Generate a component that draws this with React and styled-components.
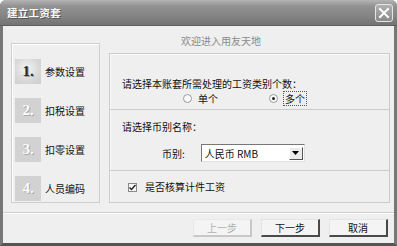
import React from 'react'
import styled, { createGlobalStyle } from 'styled-components'

const GlobalStyle = createGlobalStyle`
  html, body {
    margin: 0;
    padding: 0;
    overflow: hidden;
    background: #ffffff;
  }
`

const steps = [
  { n: '1.', label: '参数设置', active: true },
  { n: '2.', label: '扣税设置' },
  { n: '3.', label: '扣零设置' },
  { n: '4.', label: '人员编码' },
]

const App = () => {
  return (
    <>
      <GlobalStyle />
      <Window>
        <TitleBar>
          <Title>建立工资套</Title>
          <CloseButton>
            <svg width="12" height="12" viewBox="0 0 12 12">
              <path d="M2 2 L10 10 M10 2 L2 10" stroke="#fff" strokeWidth="2" strokeLinecap="square" />
            </svg>
          </CloseButton>
        </TitleBar>

        <Body>
          <StepPanel>
            {steps.map((s) => (
              <Step key={s.n}>
                <StepNum active={s.active}>{s.n}</StepNum>
                <StepLabel>{s.label}</StepLabel>
              </Step>
            ))}
          </StepPanel>

          <Main>
            <Welcome>欢迎进入用友天地</Welcome>
            <GroupBox>
              <Section height={57} top={22}>
                <Prompt>请选择本账套所需处理的工资类别个数：</Prompt>
                <RadioRow>
                  <Radio>
                    <RadioDot />
                    <span>单个</span>
                  </Radio>
                  <Radio>
                    <RadioDot checked />
                    <Focused>多个</Focused>
                  </Radio>
                </RadioRow>
              </Section>
              <Section height={62} top={9}>
                <Prompt>请选择币别名称：</Prompt>
                <SelectRow>
                  <span>币别:</span>
                  <Select>
                    <span>人民币 RMB</span>
                    <SelectArrow>
                      <svg width="7" height="4" viewBox="0 0 7 4">
                        <path d="M0 0 H7 L3.5 4 Z" fill="#000" />
                      </svg>
                    </SelectArrow>
                  </Select>
                </SelectRow>
              </Section>
              <Section height={31} top={9} last>
                <CheckRow>
                  <CheckBox>
                    <svg width="7" height="7" viewBox="0 0 7 7">
                      <path d="M0.5 3.5 L2.5 5.5 L6.5 1" stroke="#222" strokeWidth="1.4" fill="none" />
                    </svg>
                  </CheckBox>
                  <span>是否核算计件工资</span>
                </CheckRow>
              </Section>
            </GroupBox>
          </Main>
        </Body>

        <Footer>
          <Button disabled>上一步</Button>
          <Button>下一步</Button>
          <Button>取消</Button>
        </Footer>
      </Window>
    </>
  )
}

export default App

const Window = styled.div`
  width: 397px;
  height: 246px;
  box-sizing: border-box;
  background: #efefef;
  border-left: 3px solid #777;
  border-right: 3px solid #777;
  border-bottom: 3px solid #555;
  border-radius: 6px 6px 0 0;
  display: flex;
  flex-direction: column;
  font-family: "Noto Sans CJK SC", "Liberation Sans", sans-serif;
  font-size: 10px;
  color: #111;
`

const TitleBar = styled.div`
  height: 26px;
  margin: 0 -3px;
  box-sizing: border-box;
  padding: 0 4px 0 7px;
  border-radius: 6px 6px 0 0;
  background: linear-gradient(#b4b4b4 0%, #929292 25%, #828282 70%, #737373 100%);
  border-bottom: 1px solid #5e5e5e;
  display: flex;
  align-items: center;
  justify-content: space-between;
`

const Title = styled.div`
  color: #fafafa;
  font-weight: bold;
  font-size: 10.5px;
  letter-spacing: 0.3px;
  text-shadow: 1px 1px 0 #555;
`

const CloseButton = styled.div`
  width: 18px;
  height: 18px;
  box-sizing: border-box;
  border: 1px solid #e6e6e6;
  border-radius: 3px;
  background: linear-gradient(#b0b0b0, #8a8a8a);
  display: flex;
  align-items: center;
  justify-content: center;
`

const Body = styled.div`
  display: flex;
  align-items: flex-start;
  padding: 8px 0 0 8px;
  gap: 9px;
`

const StepPanel = styled.div`
  width: 89px;
  height: 160px;
  margin-top: 9px;
  box-sizing: border-box;
  border: 1px solid #cfcfcf;
  box-shadow: inset 1px 1px 0 #fff;
  padding: 15px 0 0 3px;
  display: flex;
  flex-direction: column;
  gap: 14px;
`

const Step = styled.div`
  display: flex;
  align-items: center;
  gap: 4px;
`

const StepNum = styled.div`
  width: 26px;
  height: 25px;
  background: ${(p) => (p.active ? 'radial-gradient(circle at 45% 40%, #f4f4f4 0%, #d8d8d8 60%, #cdcdcd 100%)' : '#d2d2d2')};
  color: ${(p) => (p.active ? '#2a2a2a' : '#fbfbfb')};
  font-family: "Liberation Serif", serif;
  font-weight: bold;
  font-size: 15px;
  display: flex;
  align-items: center;
  justify-content: center;
  text-shadow: ${(p) => (p.active ? '1px 1px 0 #999' : '1px 1px 0 #aaa')};
`

const StepLabel = styled.div`
  font-size: 10px;
  color: #111;
`

const Main = styled.div`
  width: 281px;
  display: flex;
  flex-direction: column;
`

const Welcome = styled.div`
  height: 19px;
  padding-left: 72px;
  color: #8a8a8a;
  font-size: 10px;
  line-height: 13px;
`

const GroupBox = styled.div`
  height: 150px;
  box-sizing: border-box;
  border: 1px solid #cbcbcb;
  box-shadow: inset 1px 1px 0 #fafafa;
  display: flex;
  flex-direction: column;
`

const Section = styled.div`
  height: ${(p) => p.height}px;
  box-sizing: border-box;
  border-bottom: ${(p) => (p.last ? 'none' : '1px solid #cbcbcb')};
  padding: ${(p) => p.top}px 0 0 12px;
  display: flex;
  flex-direction: column;
`

const Prompt = styled.div`
  line-height: 16px;
`

const RadioRow = styled.div`
  display: flex;
  padding-left: 61px;
  gap: 51px;
`

const Radio = styled.div`
  display: flex;
  align-items: center;
  gap: 6px;
  line-height: 13px;
`

const RadioDot = styled.span`
  width: 9px;
  height: 9px;
  box-sizing: border-box;
  border-radius: 50%;
  border: 1px solid #9a9a9a;
  background: #fafafa;
  display: flex;
  align-items: center;
  justify-content: center;
  &::after {
    content: '';
    width: 3px;
    height: 3px;
    border-radius: 50%;
    background: ${(p) => (p.checked ? '#222' : 'transparent')};
  }
`

const Focused = styled.span`
  outline: 1px dotted #555;
  padding: 0 1px;
`

const SelectRow = styled.div`
  display: flex;
  align-items: center;
  padding-left: 40px;
  gap: 16px;
  margin-top: 9px;
`

const Select = styled.div`
  width: 104px;
  height: 18px;
  box-sizing: border-box;
  background: #fff;
  border: 1px solid;
  border-color: #777 #e0e0e0 #e0e0e0 #777;
  display: flex;
  align-items: center;
  justify-content: space-between;
  padding: 0 1px 0 3px;
`

const SelectArrow = styled.div`
  width: 14px;
  height: 13px;
  box-sizing: border-box;
  background: #ececec;
  border: 1px solid;
  border-color: #fff #555 #555 #fff;
  display: flex;
  align-items: center;
  justify-content: center;
`

const CheckRow = styled.div`
  display: flex;
  align-items: center;
  padding-left: 6px;
  gap: 8px;
  line-height: 14px;
`

const CheckBox = styled.span`
  width: 9px;
  height: 9px;
  box-sizing: border-box;
  border: 1px solid #8a8a8a;
  background: #f6f6f6;
  display: flex;
  align-items: center;
  justify-content: center;
`

const Footer = styled.div`
  margin-top: auto;
  height: 31px;
  box-sizing: border-box;
  border-top: 1px solid #cfcfcf;
  box-shadow: inset 0 1px 0 #fff;
  display: flex;
  justify-content: flex-end;
  align-items: flex-start;
  padding: 6px 6px 0 0;
  gap: 9px;
`

const Button = styled.div`
  width: 59px;
  height: 18px;
  box-sizing: border-box;
  background: #f4f4f4;
  border: 1px solid;
  border-color: #e4e4e4 #4a4a4a #4a4a4a #e4e4e4;
  border-width: 1px 2px 2px 1px;
  color: ${(p) => (p.disabled ? '#b0b0b0' : '#111')};
  font-size: 10px;
  display: flex;
  align-items: center;
  justify-content: center;
  ${(p) => p.disabled && 'border-color: #e8e8e8 #c8c8c8 #c8c8c8 #e8e8e8;'}
`
